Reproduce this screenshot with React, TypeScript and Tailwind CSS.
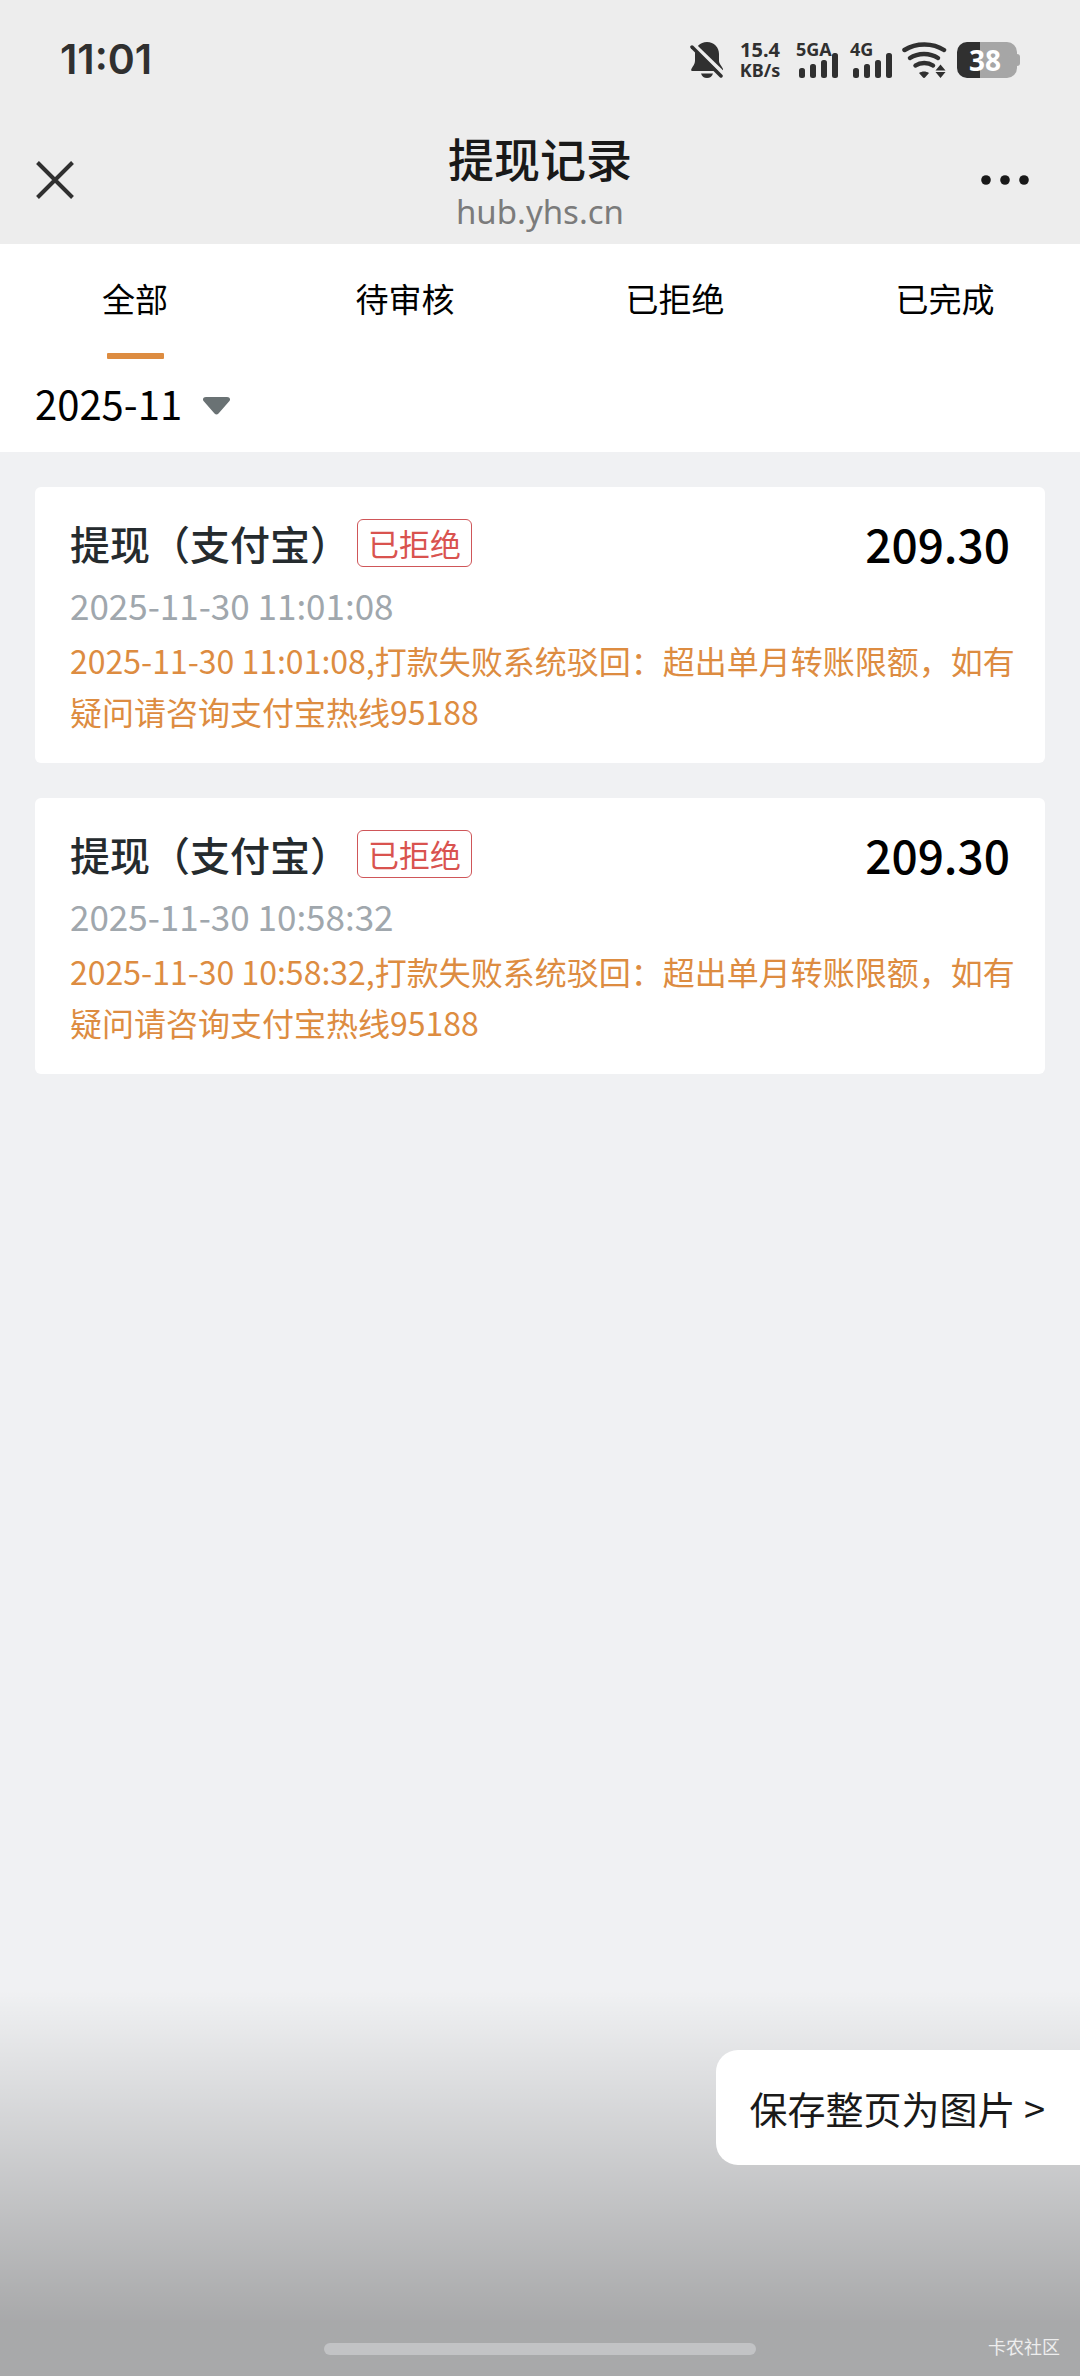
import React, { useState } from 'react';

interface WithdrawRecord {
  id: number;
  title: string;
  status: string;
  amount: string;
  time: string;
  reason: string;
}

const TABS = ['全部', '待审核', '已拒绝', '已完成'];

const RECORDS: WithdrawRecord[] = [
  {
    id: 1,
    title: '提现（支付宝）',
    status: '已拒绝',
    amount: '209.30',
    time: '2025-11-30 11:01:08',
    reason: '打款失败系统驳回：超出单月转账限额，如有疑问请咨询支付宝热线95188',
  },
  {
    id: 2,
    title: '提现（支付宝）',
    status: '已拒绝',
    amount: '209.30',
    time: '2025-11-30 10:58:32',
    reason: '打款失败系统驳回：超出单月转账限额，如有疑问请咨询支付宝热线95188',
  },
];

const MutedBell: React.FC = () => (
  <svg width="34" height="36" viewBox="0 0 34 36" fill="#303030" aria-hidden="true">
    <path d="M17 0c7 0 12 5 12 12v7c0 3 3 5 4 8 .4 1.300-.4 2-1.500 2H2.500C1 29 .8 28 1.500 26.700 3 24 5 22 5 19v-7C5 5 10 0 17 0z" />
    <path d="M11 31.500h12c-1 3-3 4.500-6 4.500s-5-1.500-6-4.500z" />
    <path d="M2 1 34 32" stroke="#ededed" strokeWidth="4" />
    <path d="M2 5 31 34" stroke="#303030" strokeWidth="3.500" strokeLinecap="round" />
  </svg>
);

const Signal: React.FC<{ label: string }> = ({ label }) => (
  <div className="relative">
    <svg width="44" height="36" viewBox="0 0 44 36" fill="#303030" aria-hidden="true">
      <rect x="3" y="26" width="6" height="10" rx="2.500" />
      <rect x="14" y="22" width="6" height="14" rx="2.500" />
      <rect x="25" y="18" width="6" height="18" rx="2.500" />
      <rect x="36" y="11" width="6" height="25" rx="2.500" />
    </svg>
    <span className="absolute -top-2 left-0 font-['Noto_Sans',sans-serif] text-[18px] leading-[30px] font-bold">{label}</span>
  </div>
);

const Wifi: React.FC = () => (
  <svg width="45" height="36" viewBox="0 0 45 36" fill="none" stroke="#303030" strokeWidth="4.500" strokeLinecap="round" aria-hidden="true">
    <path d="M2.500 8C14 .5 31 .5 42 8" />
    <path d="M8 16C16 10.500 28 10.500 36 16" />
    <path d="M13.500 23.500C18.500 20 26 20 31 23.500" />
    <path d="M17 31c3-2 7-2 10 0l-4 4.500c-.6.7-1.400.7-2 0z" fill="#303030" stroke="none" />
    <path d="m38.500 22.500 5 6h-10zM38.500 36l-5-6h10z" fill="#303030" stroke="none" />
  </svg>
);

const Battery: React.FC = () => (
  <div className="flex items-center">
    <div className="flex h-9 w-15 items-center justify-center rounded-[10px] bg-linear-to-r from-[#303030] from-38% to-[#a6a6a6] to-38% pr-1 font-['Noto_Sans',sans-serif] text-[28px] font-bold text-white">
      38
    </div>
    <div className="h-3 w-[3px] rounded-r-sm bg-[#a6a6a6]" />
  </div>
);

const StatusBar: React.FC = () => (
  <div className="flex h-[120px] items-center justify-between px-15 text-[#303030]">
    <span className="font-[Inter,sans-serif] text-[41px] font-semibold">11:01</span>
    <div className="flex items-center">
      <MutedBell />
      <div className="ml-3 w-[48px] text-center font-['Noto_Sans',sans-serif] leading-5 font-bold">
        <div className="text-[20px] leading-5">15.4</div>
        <div className="text-[18px] leading-5">KB/s</div>
      </div>
      <div className="ml-3 flex gap-[10px]">
        <Signal label="5GA" />
        <Signal label="4G" />
      </div>
      <div className="mr-[10px] ml-2">
        <Wifi />
      </div>
      <Battery />
    </div>
  </div>
);

const NavBar: React.FC = () => (
  <div className="flex h-[124px] items-center justify-between pr-[50px] pl-9">
    <button aria-label="关闭" className="flex w-[70px] pb-1">
      <svg width="38" height="38" viewBox="0 0 38 38" stroke="#303030" strokeWidth="4">
        <path d="M1.500 1.500 36.500 36.500M36.500 1.500 1.500 36.500" />
      </svg>
    </button>
    <div className="text-center">
      <h1 className="text-[46px] leading-[60px] font-medium text-[#191919]">提现记录</h1>
      <p className="font-['Noto_Sans',sans-serif] text-[33px] leading-[50px] text-[#7b7b7b]">hub.yhs.cn</p>
    </div>
    <button aria-label="更多" className="flex w-14 justify-end pb-1">
      <svg width="50" height="10" viewBox="0 0 50 10" fill="#191919">
        <circle cx="6" cy="5" r="4.800" />
        <circle cx="25" cy="5" r="4.800" />
        <circle cx="44" cy="5" r="4.800" />
      </svg>
    </button>
  </div>
);

const RecordCard: React.FC<{ record: WithdrawRecord }> = ({ record }) => (
  <article className="rounded-md bg-white px-[35px] pt-6 pb-[26px]">
    <div className="flex h-16 items-center justify-between">
      <div className="flex items-center gap-[7px]">
        <h2 className="text-[40px] leading-[60px] font-medium text-[#252b2e]">{record.title}</h2>
        <span className="rounded-md border border-[#cf5659] px-[10px] text-[31px] leading-[46px] text-[#d9534f]">
          {record.status}
        </span>
      </div>
      <span className="text-[46px] leading-[60px] font-medium text-black">{record.amount}</span>
    </div>
    <time className="block text-[35px] leading-[60px] text-[#a0a7ad]">{record.time}</time>
    {/* runs slightly into the right padding so a full line fits */}
    <p className="-mr-2 text-[32px] leading-[51px] text-[#dd8c41]">{`${record.time},${record.reason}`}</p>
  </article>
);

const App: React.FC = () => {
  const [activeTab, setActiveTab] = useState(TABS[0]);

  return (
    <div className="relative flex min-h-screen flex-col bg-[#f0f1f3] font-['Noto_Sans_CJK_SC',sans-serif]">
      <header className="bg-[#ededed]">
        <StatusBar />
        <NavBar />
      </header>

      <div className="bg-white">
        <nav className="grid grid-cols-4">
          {TABS.map((tab) => (
            <button key={tab} onClick={() => setActiveTab(tab)} className="flex h-[115px] flex-col items-center text-[33px] text-black">
              <span className="leading-[109px]">{tab}</span>
              {tab === activeTab && <span className="h-[6px] w-[57px] shrink-0 rounded-[1px] bg-[#dd8c41]" />}
            </button>
          ))}
        </nav>
        <label className="flex h-[93px] w-fit items-center gap-5 px-[35px]">
          <select aria-label="月份" className="appearance-none pb-[6px] text-[40px] text-black">
            <option>2025-11</option>
          </select>
          <svg width="27" height="18" viewBox="0 0 27 18" fill="#6a7274" aria-hidden="true">
            <path d="M3 0h21c3 0 4 2.500 2 4.500L15.500 16.500c-1.300 1.300-2.700 1.300-4 0L1 4.500C-1 2.500 0 0 3 0z" />
          </svg>
        </label>
      </div>

      <main className="flex flex-col gap-[35px] p-[35px]">
        {RECORDS.map((record) => (
          <RecordCard key={record.id} record={record} />
        ))}
      </main>

      <div className="pointer-events-none absolute inset-x-0 bottom-0 h-[386px] bg-linear-to-b from-black/0 to-black/30 to-86%" />
      <button className="absolute right-0 bottom-[211px] h-[115px] rounded-l-[22px] bg-white pr-[35px] pl-[33px] text-[38px] text-[#191919]">
        保存整页为图片 &gt;
      </button>
      <div className="absolute inset-x-0 bottom-[21px] mx-auto h-3 w-2/5 rounded-full bg-[#c2c3c5]" />
      <span className="absolute right-5 bottom-4 text-lg text-[#eeeeee]">卡农社区</span>
    </div>
  );
};

export default App;
